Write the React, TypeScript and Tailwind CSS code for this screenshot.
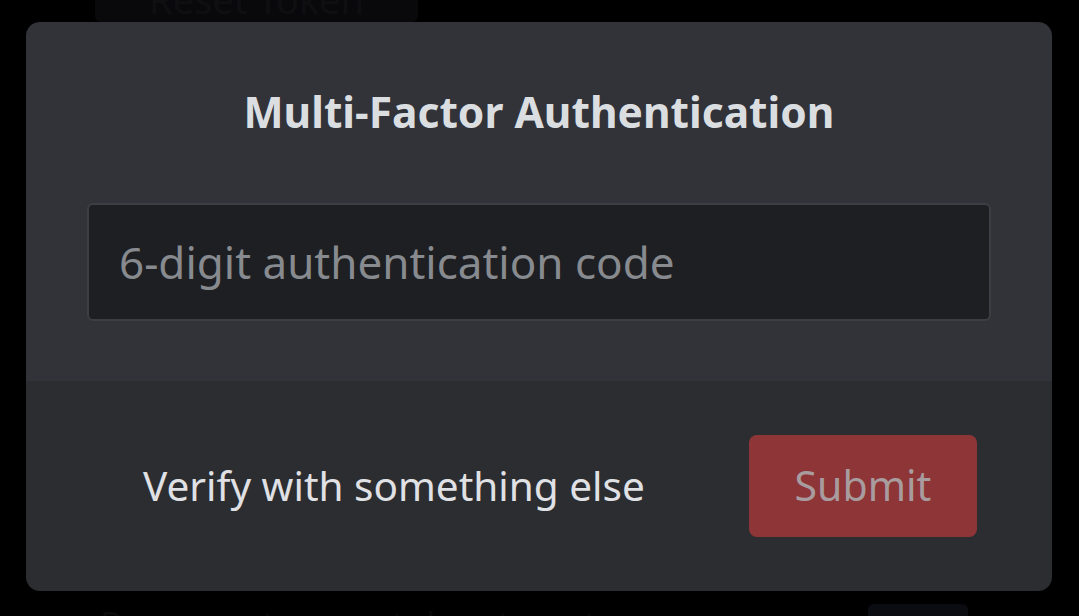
const App = () => {
  return (
    <div
      className="relative w-[1079px] h-[616px] overflow-hidden bg-black"
      style={{ fontFamily: '"Noto Sans", "Open Sans", sans-serif' }}
    >
      {/* page behind the overlay */}
      <div className="absolute left-[95px] top-[-24px] w-[323px] h-[46px] rounded-[6px] bg-[#09090b] flex items-center justify-center text-[38px] text-[#0f0f11]">
        Reset Token
      </div>
      <div className="absolute left-[100px] top-[598px] text-[36px] text-[#09090a] whitespace-nowrap">
        Regenerate your token to get a new one
      </div>
      <div className="absolute left-[868px] top-[604px] w-[100px] h-[40px] rounded-[6px] bg-[#0b0b12]" />

      {/* modal */}
      <div className="absolute left-[26px] top-[22px] w-[1026px] h-[569px] rounded-[14px] overflow-hidden flex flex-col">
        <div className="bg-[#313338] px-[61px] pt-[64px] pb-[60px] flex flex-col">
          <h1 className="text-center text-[42.5px] leading-[52px] font-bold text-[#dbdee1]">
            Multi-Factor Authentication
          </h1>
          <input
            type="text"
            placeholder="6-digit authentication code"
            className="mt-[65px] h-[118px] w-full rounded-[6px] border-2 border-[#3c3e44] bg-[#1e1f22] px-[30px] text-[44px] text-[#dbdee1] placeholder:text-[#878a8e] outline-none"
          />
        </div>
        <div className="flex-1 bg-[#2b2d31] flex items-center justify-between pl-[117px] pr-[75px]">
          <button className="text-[40.5px] text-[#e0e1e5]">Verify with something else</button>
          <button
            disabled
            className="w-[228px] h-[102px] rounded-[8px] bg-[#8e3538] text-[41px] text-[#a89c9f]"
          >
            Submit
          </button>
        </div>
      </div>
    </div>
  );
};

export default App;
